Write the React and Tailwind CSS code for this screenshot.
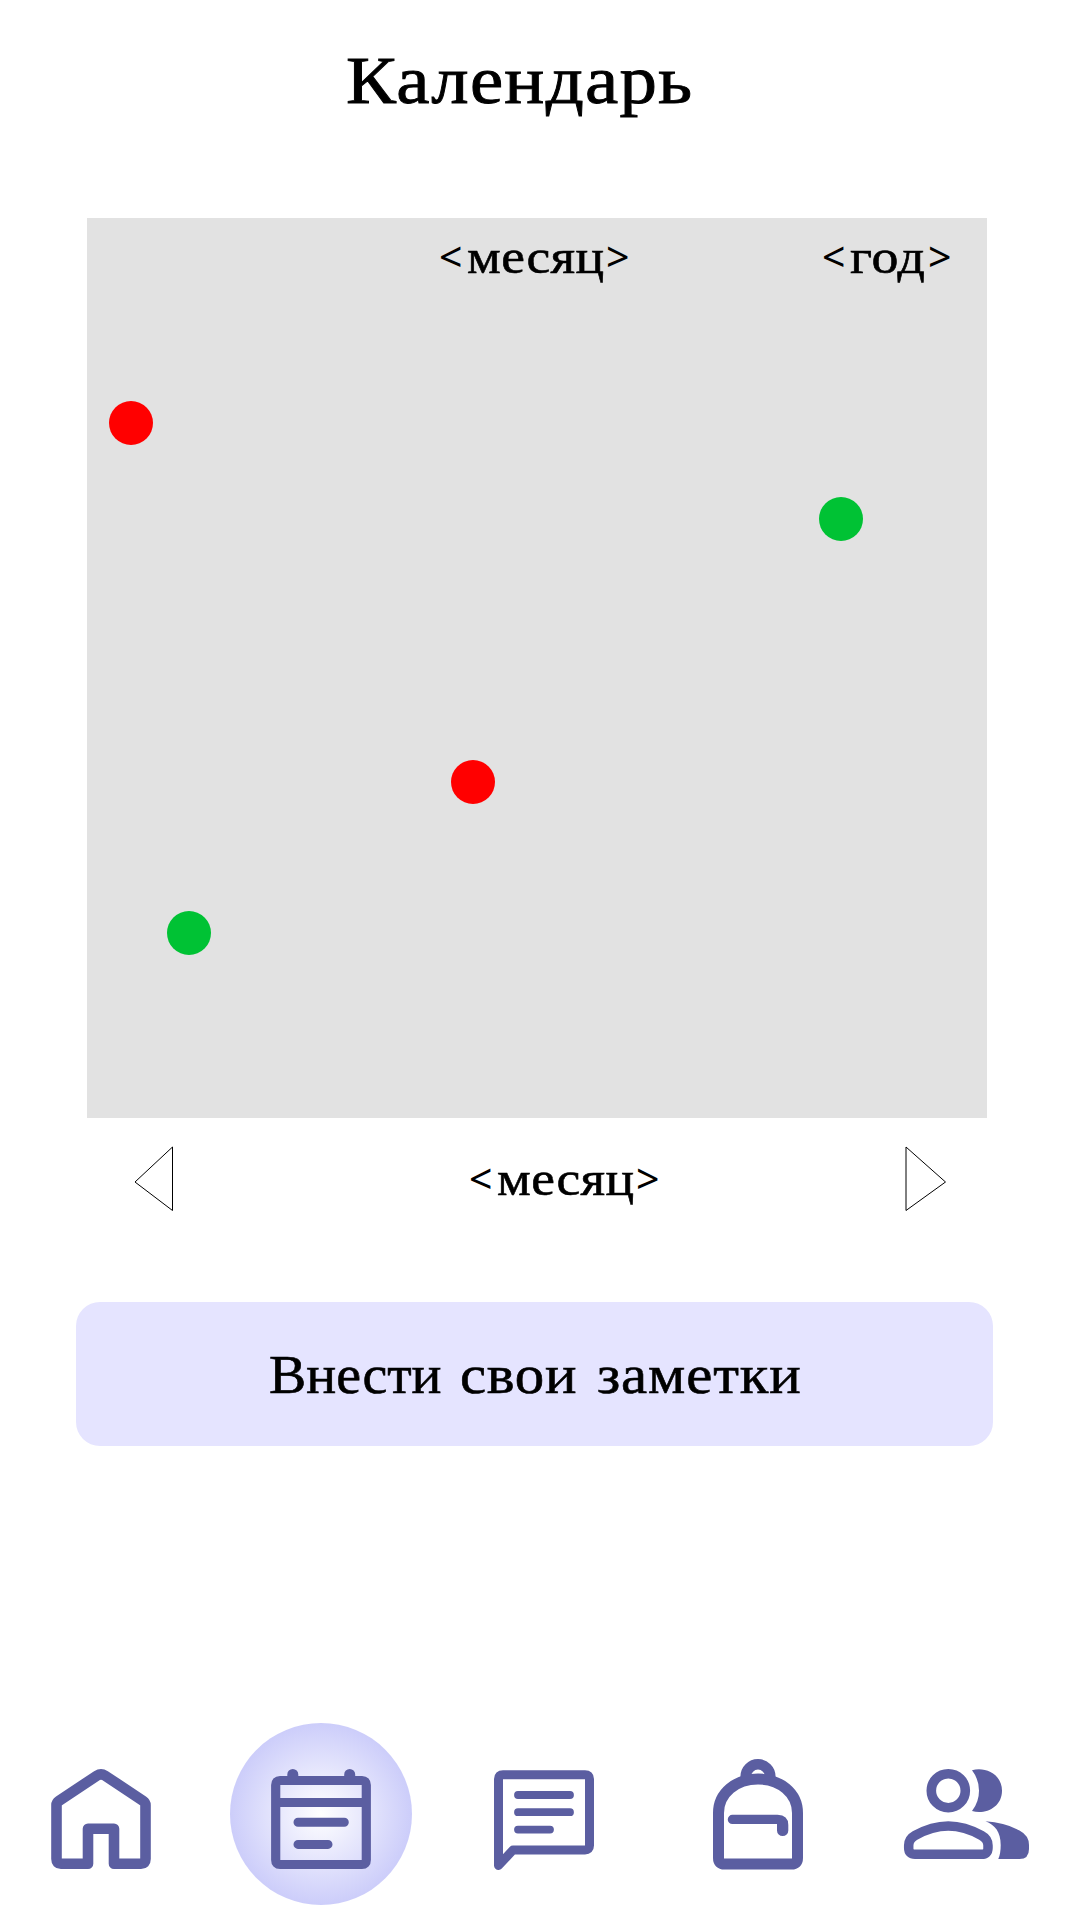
const INK = "#5b5ea1";

const markers = [
  "left-[22px] top-[183px] bg-[#ff0000]",
  "left-[732px] top-[279px] bg-[#00c234]",
  "left-[364px] top-[542px] bg-[#ff0000]",
  "left-[80px] top-[693px] bg-[#00c234]",
];

function HomeIcon() {
  return (
    <svg className="h-[100px] w-[100px] overflow-visible" viewBox="0 0 100 100" fill="none">
      <path
        d="M5.500 36Q5.500 33.500 8 31.800L46 6.600Q50 4 54 6.600L92 31.800Q94.500 33.500 94.500 36V90Q94.500 94.700 90 94.700H63V59.700H37V94.700H10Q5.500 94.700 5.500 90Z"
        stroke={INK} strokeWidth="10.600" strokeLinejoin="round"
      />
    </svg>
  );
}

function CalendarIcon() {
  return (
    <svg className="h-[100px] w-[100px] overflow-visible" viewBox="0 0 100 100" fill="none" stroke={INK}>
      <path d="M9 11.500H91Q95.300 11.500 95.300 16V91Q95.300 95.500 91 95.500H9Q4.700 95.500 4.700 91V16Q4.700 11.500 9 11.500Z" strokeWidth="9.200" />
      <path d="M5 33.500H95" strokeWidth="9" />
      <path d="M21.800 5.500V8M78.700 5.500V8" strokeWidth="11" strokeLinecap="round" />
      <path d="M27 53.300H73.300M27 75.400H57" strokeWidth="9" strokeLinecap="round" />
    </svg>
  );
}

function ChatIcon() {
  return (
    <svg className="h-[100px] w-[100px]" viewBox="0 0 100 100" fill="none" stroke={INK} strokeLinecap="round" strokeLinejoin="round">
      <path d="M4.500 95.500V9Q4.500 4.700 9 4.700H91Q95.500 4.700 95.500 9V75.500Q95.500 80 91 80H19Z" strokeWidth="9" />
      <path d="M24 25H76M24 42.200H76M24 59.600H56" strokeWidth="7.800" />
    </svg>
  );
}

function BackpackIcon() {
  return (
    <svg className="h-[110px] w-[90px] overflow-visible" viewBox="0 0 90 110" fill="none" stroke={INK}>
      <path d="M45 20C67 20 84.500 34 84.500 54V99Q84.500 105 78.500 105H11.500Q5.500 105 5.500 99V54C5.500 34 23 20 45 20Z" strokeWidth="11" />
      <path d="M32.700 19V17.600A12.300 12.300 0 0 1 57.300 17.600V19" strokeWidth="10.600" />
      <path d="M19.400 55.800H64.500Q75.300 56 75.300 66V71.400A5.650 5.650 0 0 1 64 71.400V65.100H19.400A4.650 4.650 0 0 1 19.400 55.800Z" fill={INK} stroke="none" />
    </svg>
  );
}

function PeopleIcon() {
  return (
    <svg className="h-[90px] w-[125px] overflow-visible" viewBox="0 0 125 90" fill="none">
      <circle cx="44.300" cy="21.700" r="17" stroke={INK} strokeWidth="9.600" />
      <path d="M68 1.300C81 -2.500 98 5 98 21.700S81 46 68 42Q75 33 75 21.700T68 1.300Z" fill={INK} />
      <path d="M11 66.500Q28 57 44.300 57T77.500 66.500Q84 70 84 76.500V79Q84 85.300 77.500 85.300H11Q4.700 85.300 4.700 79V76.500Q4.700 70 11 66.500Z" stroke={INK} strokeWidth="9.500" />
      <path d="M81.500 52.300Q101 53.500 115.500 61.500Q125 66.500 125 76V80Q125 90 115.500 90H94.300Q96.700 85 96.700 76C96.700 63 91 56 81.500 52.300Z" fill={INK} />
    </svg>
  );
}

function Placeholder({ children, className, wordClass }) {
  return (
    <span className={"flex items-baseline text-[49px] leading-[56px] " + className}>
      <span className="w-[28px] -translate-y-[1px] font-['Noto_Sans',sans-serif] text-[41px] leading-[50px]">&lt;</span>
      <span className={"origin-left [-webkit-text-stroke:0.6px_black] " + wordClass}>{children}</span>
      <span className="-translate-y-[1px] font-['Noto_Sans',sans-serif] text-[41px] leading-[50px]">&gt;</span>
    </span>
  );
}

export default function App() {
  return (
    <div className="flex h-[1920px] w-[1080px] flex-col overflow-hidden bg-white font-['Liberation_Serif',serif] whitespace-nowrap text-black">
      <h1 className="mt-[41px] ml-[346px] h-[177px] w-[360px] origin-left scale-x-110 text-[68px] leading-[78px] tracking-[1.150px] [-webkit-text-stroke:0.9px_black]">Календарь</h1>

      <section className="relative ml-[87px] h-[900px] w-[900px] shrink-0 bg-[#e2e2e2]">
        <div className="flex pt-[11px]">
          <Placeholder className="ml-[352px] w-[383px]" wordClass="w-[139px] scale-x-[1.09] tracking-[0.3px]">месяц</Placeholder>
          <Placeholder className="" wordClass="w-[78px] scale-x-[1.1] tracking-[0.6px]">год</Placeholder>
        </div>
        {markers.map((m) => (
          <span key={m} className={"absolute h-[44px] w-[44px] rounded-full " + m} />
        ))}
      </section>

      <div className="flex h-[184px] shrink-0 items-start pt-[28px] pl-[134px]">
        <svg className="h-[66px] w-[40px]" viewBox="0 0 40 66" fill="none" stroke="black">
          <path d="M38.500 1V64.500L1 36Z" />
        </svg>
        <Placeholder className="mt-[5px] ml-[295px] w-[436px]" wordClass="w-[139px] scale-x-[1.09] tracking-[0.3px]">месяц</Placeholder>
        <svg className="h-[66px] w-[42px]" viewBox="0 0 42 66" fill="none" stroke="black">
          <path d="M1 1V64.500L40.500 36Z" />
        </svg>
      </div>

      <button className="ml-[76px] flex h-[144px] w-[917px] shrink-0 items-center rounded-[24px] bg-[#e5e4ff] pt-[2px] pl-[193px] text-left text-[54px] leading-[62px] [-webkit-text-stroke:0.6px_black]">
        <span className="w-[191px] origin-left scale-x-[1.035]">Внести </span>
        <span className="w-[137px] origin-left scale-x-[1.09] tracking-[0.6px]">свои </span>
        <span className="origin-left scale-x-[1.09] tracking-[0.8px]">заметки</span>
      </button>

      <nav className="mt-[277px] flex h-[182px] shrink-0 items-start">
        <div className="mt-[46px] ml-[51px]"><HomeIcon /></div>
        <div className="ml-[79px] flex h-[182px] w-[182px] justify-center rounded-full bg-[radial-gradient(circle_closest-side,#ffffff,#cccdfa)] pt-[46px]">
          <CalendarIcon />
        </div>
        <div className="mt-[47px] ml-[82px]"><ChatIcon /></div>
        <div className="mt-[36px] ml-[119px]"><BackpackIcon /></div>
        <div className="mt-[46px] ml-[101px]"><PeopleIcon /></div>
      </nav>
    </div>
  );
}
